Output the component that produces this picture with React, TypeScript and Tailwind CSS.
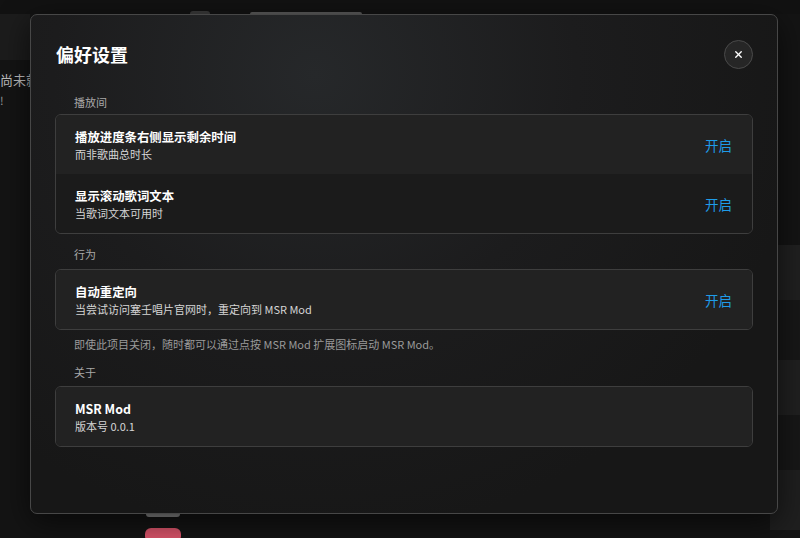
import { X } from "lucide-react";

const font = { fontFamily: '"Noto Sans CJK SC", "Noto Sans", sans-serif' };

type Row = { title: string; desc: string; action?: string };

function SettingRow({ row, dim }: { row: Row; dim?: boolean }) {
  return (
    <div
      className={`flex h-[59px] items-center justify-between px-[19px] ${
        dim ? "bg-[#1b1b1b]" : "bg-[#222222]"
      }`}
    >
      <div className="flex flex-col">
        <span className="text-[12.4px] font-semibold leading-[18px] text-white">{row.title}</span>
        <span className="text-[11px] leading-[16px] text-[#d6d6d6]">{row.desc}</span>
      </div>
      {row.action && (
        <span className="mr-[1px] text-[13.5px] leading-[18px] text-[#1f9ce8]">{row.action}</span>
      )}
    </div>
  );
}

function SectionLabel({ children }: { children: string }) {
  return <div className="px-[19px] text-[11px] leading-[16px] text-[#a8a8a8]">{children}</div>;
}

export default function App() {
  return (
    <div className="relative h-[538px] w-[800px] overflow-hidden bg-[#141414]" style={font}>
      {/* page behind the dialog */}
      <div className="flex h-[14px] bg-[#121212]">
        <div className="ml-[190px] mt-[11px] h-[3px] w-[20px] rounded-t bg-[#3a3a3a]" />
        <div className="ml-[40px] mt-[12px] h-[2px] w-[112px] rounded-t bg-[#5a5a5a]" />
      </div>
      <div className="h-[46px] w-[30px] bg-[#1c1c1c]" />
      <div className="w-[30px] pt-[10px]">
        <div className="whitespace-nowrap text-[13px] leading-[20px] text-[#bdbdbd]">尚未就绪</div>
        <div className="text-[11px] leading-[20px] text-[#9a9a9a]">!</div>
      </div>
      <div className="absolute right-0 top-[245px] flex w-[30px] flex-col">
        <div className="h-[55px] bg-[#202020]" />
        <div className="h-[60px] bg-[#171717]" />
        <div className="h-[55px] bg-[#202020]" />
        <div className="h-[55px] bg-[#171717]" />
        <div className="h-[60px] bg-[#1f1f1f]" />
      </div>
      <div className="absolute left-[145px] top-[528px] h-[14px] w-[36px] rounded-md bg-[#d9546a]" />
      <div className="absolute left-[146px] top-[511px] h-[6px] w-[34px] rounded bg-[#8a8a8a]" />

      {/* dialog */}
      <div className="absolute left-[30px] top-[14px] h-[500px] w-[748px] rounded-[7px] border border-[#474747] bg-[#181818] bg-[radial-gradient(ellipse_at_38%_12%,#26282a_0%,#1c1c1d_40%,#171717_75%)] px-[24px] pt-[24px] shadow-[0_8px_30px_rgba(0,0,0,0.6)]">
        <div className="flex h-[30px] items-center justify-between pl-[1px]">
          <h1 className="text-[18px] font-bold leading-[28px] text-white">偏好设置</h1>
          <button className="flex h-[29px] w-[29px] items-center justify-center rounded-full border border-[#4a4a4a] bg-[#262626] text-white">
            <X size={11} strokeWidth={3} />
          </button>
        </div>

        <div className="mt-[25px]">
          <SectionLabel>播放间</SectionLabel>
          <div className="mt-[4px] overflow-hidden rounded-[6px] border border-[#3e3e3e]">
            <SettingRow row={{ title: "播放进度条右侧显示剩余时间", desc: "而非歌曲总时长", action: "开启" }} />
            <SettingRow row={{ title: "显示滚动歌词文本", desc: "当歌词文本可用时", action: "开启" }} dim />
          </div>
        </div>

        <div className="mt-[12px]">
          <SectionLabel>行为</SectionLabel>
          <div className="mt-[7px] overflow-hidden rounded-[6px] border border-[#3e3e3e]">
            <SettingRow
              row={{ title: "自动重定向", desc: "当尝试访问塞壬唱片官网时，重定向到 MSR Mod", action: "开启" }}
            />
          </div>
          <div className="mt-[6px] px-[19px] text-[11px] leading-[16px] text-[#9a9a9a]">
            即使此项目关闭，随时都可以通过点按 MSR Mod 扩展图标启动 MSR Mod。
          </div>
        </div>

        <div className="mt-[12px]">
          <SectionLabel>关于</SectionLabel>
          <div className="mt-[6px] overflow-hidden rounded-[6px] border border-[#3e3e3e]">
            <SettingRow row={{ title: "MSR Mod", desc: "版本号 0.0.1" }} />
          </div>
        </div>
      </div>
    </div>
  );
}
